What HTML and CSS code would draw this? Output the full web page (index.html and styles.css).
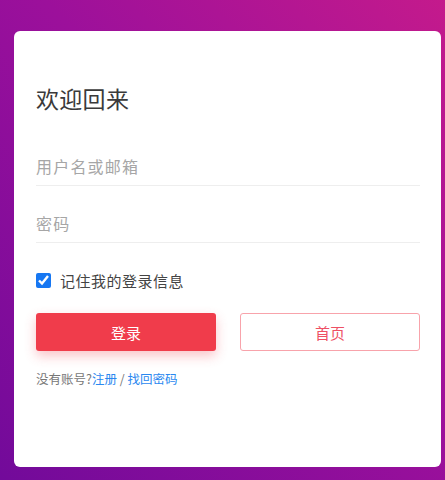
FILE: index.html
```html
<!DOCTYPE html>
<html lang="zh-CN">
<head>
<meta charset="utf-8">
<title>欢迎回来</title>
<link rel="stylesheet" href="styles.css">
</head>
<body>
<div class="page">
  <form class="card">
    <h2 class="title">欢迎回来</h2>
    <input class="field" type="text" placeholder="用户名或邮箱">
    <input class="field field-pw" type="password" placeholder="密码">
    <label class="remember">
      <input class="check" type="checkbox" checked>
      <span>记住我的登录信息</span>
    </label>
    <div class="actions">
      <button type="button" class="btn btn-primary">登录</button>
      <button type="button" class="btn btn-outline">首页</button>
    </div>
    <p class="links">没有账号?<a href="#">注册</a> / <a href="#">找回密码</a></p>
  </form>
</div>
</body>
</html>
```

FILE: styles.css
```css
* { box-sizing: border-box; }
html, body { margin: 0; padding: 0; }
body {
  font-family: "Noto Sans CJK SC", "Noto Sans", sans-serif;
  width: 445px;
  height: 480px;
  overflow: hidden;
}
.page {
  width: 445px;
  height: 480px;
  background: linear-gradient(to top right, #720a9a 0%, #9c109b 55%, #c41a8c 100%);
  padding: 31px 4px 13px 14px;
}
.card {
  background: #fff;
  border-radius: 6px;
  height: 436px;
  padding: 52px 21px 0 22px;
  display: flex;
  flex-direction: column;
}
.title {
  margin: 0;
  font-size: 23px;
  line-height: 30px;
  letter-spacing: 0.3px;
  font-weight: 400;
  color: #3a3a3a;
}
.field {
  margin-top: 33px;
  height: 40px;
  border: 0;
  border-bottom: 1px solid #eeeeee;
  outline: none;
  padding: 0;
  font-family: inherit;
  font-size: 16px;
  letter-spacing: 1.2px;
  color: #333;
  background: transparent;
}
.field-pw { margin-top: 17px; }
.field::placeholder { color: #a6a6a6; }
.remember {
  margin-top: 27px;
  height: 20px;
  display: flex;
  align-items: center;
  gap: 9px;
  font-size: 15px;
  letter-spacing: 0.5px;
  color: #444;
}
.check {
  margin: 0;
  width: 15px;
  height: 15px;
  accent-color: #1677f2;
}
.actions {
  margin-top: 23px;
  display: grid;
  grid-template-columns: 1fr 1fr;
  gap: 24px;
}
.btn {
  height: 38px;
  border-radius: 3px;
  font-family: inherit;
  font-size: 15px;
  cursor: pointer;
}
.btn-primary {
  background: #f03c4b;
  border: 0;
  color: #fff;
  box-shadow: 0 5px 12px rgba(240, 60, 75, 0.3);
}
.btn-outline {
  background: #fff;
  border: 1px solid #f8a3ab;
  color: #ee5064;
}
.links {
  margin: 19px 0 0;
  font-size: 12.5px;
  line-height: 18px;
  color: #777;
}
.links a {
  color: #2a88f0;
  text-decoration: none;
}
```
